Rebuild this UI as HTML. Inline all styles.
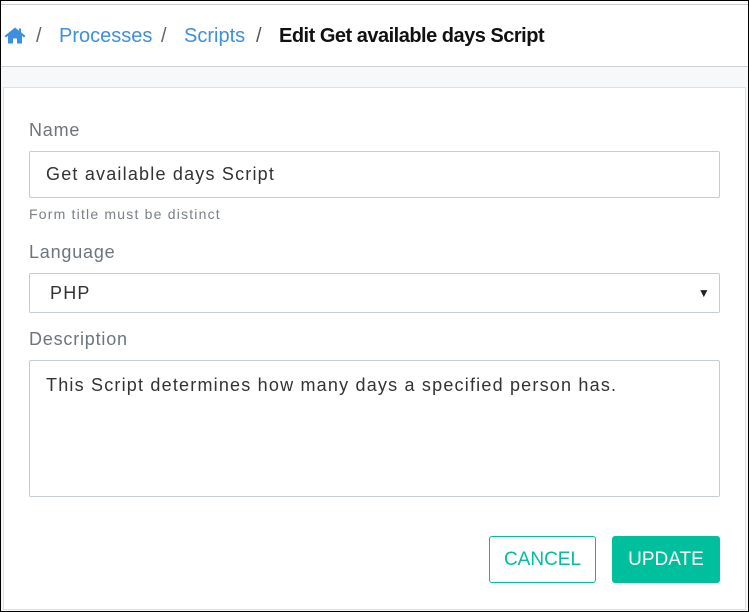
<!DOCTYPE html>
<html><head><style>
*{box-sizing:border-box;margin:0;padding:0}
html,body{width:749px;height:612px;overflow:hidden;background:#fff;font-family:"Liberation Sans",sans-serif}
.frame{position:absolute;left:0;top:0;width:749px;height:612px;border:1px solid #000}
.topline{position:absolute;left:1px;right:1px;top:4px;height:1px;background:#ccc}
.crumb{position:absolute;left:4px;top:25px;font-size:20px;color:#3d8fe0;white-space:nowrap}
.crumb span{position:absolute;top:0}
.sep{color:#666}
.bar{position:absolute;left:1px;right:1px;top:66px;height:1px;background:#d0d0d0}
.bg{position:absolute;left:1px;right:1px;top:67px;bottom:1px;background:#f7f8fa}
.card{position:absolute;left:3px;top:87px;width:743px;height:523px;background:#fff;border:1px solid #e0e0e0}
.lbl{position:absolute;left:29px;font-size:18px;color:#6c757d;letter-spacing:0.8px}
.inp{position:absolute;left:29px;width:691px;border:1px solid #c5ccd3;border-radius:2px;font-size:18px;color:#333;padding-left:16px;letter-spacing:1.2px}
.help{position:absolute;left:29px;top:206px;font-size:14px;color:#7a8088;letter-spacing:1.2px}
.btn{position:absolute;top:536px;height:47px;border-radius:3px;font-size:19px;text-align:center;line-height:47px}
</style></head><body>
<div class="bg"></div>
<div class="topline"></div>
<div class="bar"></div>
<div class="card"></div>
<div class="crumb">
<svg style="position:absolute;left:0;top:1px" width="22" height="19" viewBox="0 0 22 18"><path d="M11 1 L0.5 9.5 L2 11 L4 9.4 V17 H9 V12 H13 V17 H18 V9.4 L20 11 L21.5 9.5 L17 5.8 V2 H15 V4.2 Z" fill="#3d8fe0"/></svg>
<span class="sep" style="left:32px">/</span>
<span style="left:55px">Processes</span>
<span class="sep" style="left:157px">/</span>
<span style="left:180px">Scripts</span>
<span class="sep" style="left:252px;color:#555">/</span>
<span style="left:275px;color:#111;font-weight:bold;letter-spacing:-0.5px">Edit Get available days Script</span>
</div>
<div class="lbl" style="top:120px">Name</div>
<div class="inp" style="top:151px;height:47px;line-height:45px">Get available days Script</div>
<div class="help">Form title must be distinct</div>
<div class="lbl" style="top:242px">Language</div>
<div class="inp" style="top:273px;height:40px;line-height:38px;padding-left:20px">PHP<span style="position:absolute;right:8px;font-size:12px;color:#222">▼</span></div>
<div class="lbl" style="top:329px">Description</div>
<div class="inp" style="top:360px;height:137px;padding-top:12px;line-height:24px">This Script determines how many days a specified person has.</div>
<div class="btn" style="left:489px;width:107px;border:1px solid #00bf9c;color:#00bf9c;line-height:45px">CANCEL</div>
<div class="btn" style="left:612px;width:108px;background:#00bf9c;color:#fff">UPDATE</div>
<div class="frame"></div>
</body></html>
